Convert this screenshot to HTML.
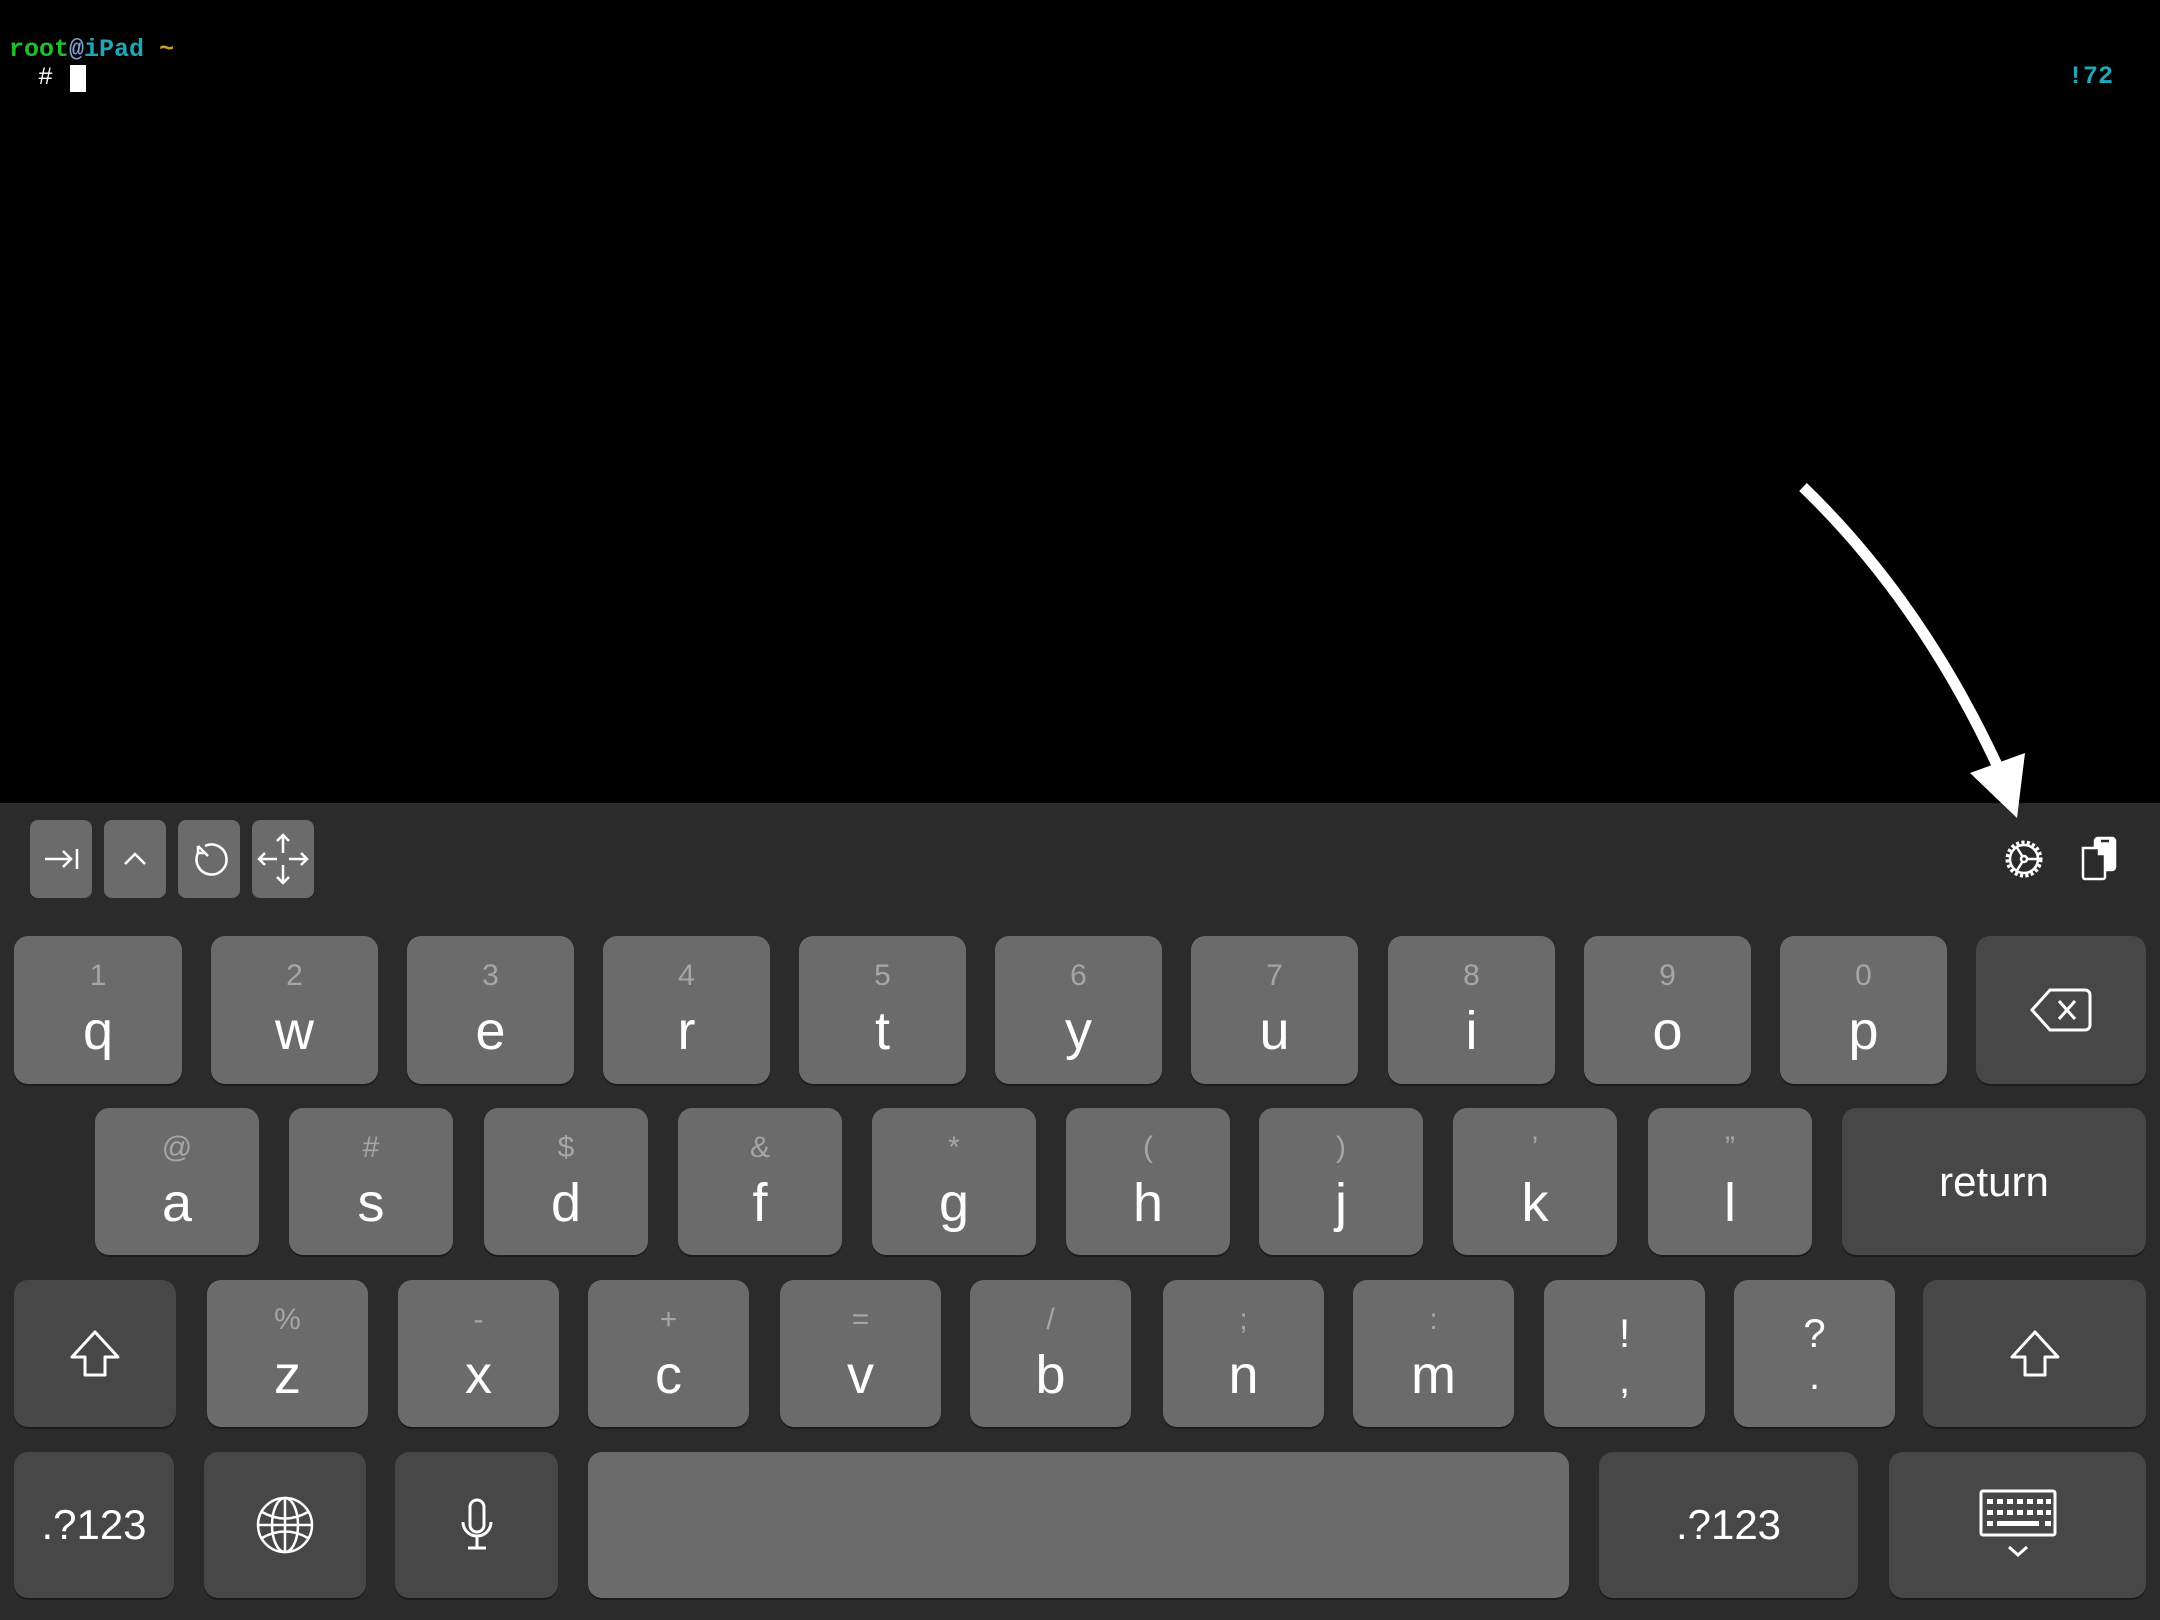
<!DOCTYPE html>
<html><head><meta charset="utf-8"><style>
html,body{margin:0;padding:0;background:#000;}
body{width:2160px;height:1620px;position:relative;overflow:hidden;font-family:"Liberation Sans",sans-serif;}
.term{position:absolute;font-family:"Liberation Mono",monospace;font-weight:bold;font-size:25px;line-height:28px;}
.kb{position:absolute;left:0;top:803px;width:2160px;height:817px;background:#2b2b2b;}
.k{position:absolute;background:#6b6b6b;border-radius:14px;box-shadow:0 2px 0 #1c1c1c;color:#fff;text-align:center;}
.d{background:#474747;}
.h{position:absolute;left:0;right:0;font-size:30px;line-height:30px;color:#a6a6a6;}
.l{position:absolute;left:0;right:0;font-size:54px;line-height:54px;}
.k .l[style*="top:73px"]{margin-top:-5px;}
.tb{position:absolute;top:820px;width:62px;height:78px;background:#6b6b6b;border-radius:8px;}
.c{position:absolute;left:0;top:0;width:100%;height:100%;display:flex;align-items:center;justify-content:center;}
svg{display:block;}
</style></head><body>
<div class="term" style="left:9px;top:36px;"><span style="color:#1fbf2c">root</span><span style="color:#7f9fd0">@</span><span style="color:#1fa7b8">iPad</span> <span style="color:#c8a020">~</span></div>
<div class="term" style="left:38px;top:64px;color:#fff;font-weight:normal;">#</div>
<div style="position:absolute;left:70px;top:65px;width:16px;height:27px;background:#fff;"></div>
<div class="term" style="left:2068px;top:63px;color:#1fa7b8;">!72</div>

<div class="kb"></div>
<!-- toolbar -->
<div class="tb" style="left:30px"><div class="c"><svg width="40" height="40" viewBox="0 0 40 40" fill="none" stroke="#fff" stroke-width="2.5"><path d="M4 20H30M22 12L30 20L22 28M36 10V30"/></svg></div></div>
<div class="tb" style="left:104px"><div class="c"><svg width="40" height="40" viewBox="0 0 40 40" fill="none" stroke="#fff" stroke-width="2.5"><path d="M10 25L20 15L30 25"/></svg></div></div>
<div class="tb" style="left:178px"><div class="c"><svg width="40" height="40" viewBox="0 0 40 40" fill="none" stroke="#fff" stroke-width="2.5"><path d="M9 14A15 15 0 1 0 16 7"/><path d="M9 7V14H16M9 7L19 17"/></svg></div></div>
<div class="tb" style="left:252px"><div class="c"><svg width="56" height="56" viewBox="0 0 56 56" fill="none" stroke="#fff" stroke-width="2.5"><path d="M28 4V22M28 34V52M4 28H22M34 28H52M22 10L28 4L34 10M22 46L28 52L34 46M10 22L4 28L10 34M46 22L52 28L46 34"/></svg></div></div>
<svg style="position:absolute;left:2003px;top:838px" width="42" height="42" viewBox="0 0 42 42" fill="none" stroke="#fff" stroke-width="2.5"><circle cx="21" cy="21" r="16" stroke-dasharray="3 2.2" stroke-width="5"/><circle cx="21" cy="21" r="14"/><circle cx="21" cy="21" r="3"/><path d="M24 21H35M19.5 18.5L13 8M19.5 23.5L13 34"/></svg>
<svg style="position:absolute;left:2080px;top:836px" width="40" height="46" viewBox="0 0 40 46" fill="none" stroke="#fff" stroke-width="2.5"><rect x="15" y="2" width="20" height="32" rx="3" fill="#fff"/><path d="M21 5H29" stroke="#2b2b2b"/><path d="M3 12H19L25 18V41A2 2 0 0 1 23 43H5A2 2 0 0 1 3 41Z" fill="#2b2b2b"/><path d="M19 12V18H25" fill="#fff"/></svg>

<svg style="position:absolute;left:0;top:0" width="2160" height="830">
<path d="M1803 487 Q1920 600 1997 765" stroke="#fff" stroke-width="11" fill="none"/>
<polygon points="1970,773 2025,753 2017,818" fill="#fff"/>
</svg>

<!-- row 1 -->
<div class="k" style="left:14px;top:936px;width:168px;height:148px"><div class="h" style="top:25px">1</div><div class="l" style="top:73px">q</div></div>
<div class="k" style="left:211px;top:936px;width:167px;height:148px"><div class="h" style="top:25px">2</div><div class="l" style="top:73px">w</div></div>
<div class="k" style="left:407px;top:936px;width:167px;height:148px"><div class="h" style="top:25px">3</div><div class="l" style="top:73px">e</div></div>
<div class="k" style="left:603px;top:936px;width:167px;height:148px"><div class="h" style="top:25px">4</div><div class="l" style="top:73px">r</div></div>
<div class="k" style="left:799px;top:936px;width:167px;height:148px"><div class="h" style="top:25px">5</div><div class="l" style="top:73px">t</div></div>
<div class="k" style="left:995px;top:936px;width:167px;height:148px"><div class="h" style="top:25px">6</div><div class="l" style="top:73px">y</div></div>
<div class="k" style="left:1191px;top:936px;width:167px;height:148px"><div class="h" style="top:25px">7</div><div class="l" style="top:73px">u</div></div>
<div class="k" style="left:1388px;top:936px;width:167px;height:148px"><div class="h" style="top:25px">8</div><div class="l" style="top:73px">i</div></div>
<div class="k" style="left:1584px;top:936px;width:167px;height:148px"><div class="h" style="top:25px">9</div><div class="l" style="top:73px">o</div></div>
<div class="k" style="left:1780px;top:936px;width:167px;height:148px"><div class="h" style="top:25px">0</div><div class="l" style="top:73px">p</div></div>
<div class="k d" style="left:1976px;top:936px;width:170px;height:148px"><div class="c"><svg width="64" height="48" viewBox="0 0 64 48" fill="none" stroke="#fff" stroke-width="3"><path d="M3 24L21 4H56A5 5 0 0 1 61 9V39A5 5 0 0 1 56 44H21Z"/><path d="M30 15L46 33M46 15L30 33"/></svg></div></div>
<!-- row 2 -->
<div class="k" style="left:95px;top:1108px;width:164px;height:147px"><div class="h" style="top:25px">@</div><div class="l" style="top:73px">a</div></div>
<div class="k" style="left:289px;top:1108px;width:164px;height:147px"><div class="h" style="top:25px">#</div><div class="l" style="top:73px">s</div></div>
<div class="k" style="left:484px;top:1108px;width:164px;height:147px"><div class="h" style="top:25px">$</div><div class="l" style="top:73px">d</div></div>
<div class="k" style="left:678px;top:1108px;width:164px;height:147px"><div class="h" style="top:25px">&amp;</div><div class="l" style="top:73px">f</div></div>
<div class="k" style="left:872px;top:1108px;width:164px;height:147px"><div class="h" style="top:25px">*</div><div class="l" style="top:73px">g</div></div>
<div class="k" style="left:1066px;top:1108px;width:164px;height:147px"><div class="h" style="top:25px">(</div><div class="l" style="top:73px">h</div></div>
<div class="k" style="left:1259px;top:1108px;width:164px;height:147px"><div class="h" style="top:25px">)</div><div class="l" style="top:73px">j</div></div>
<div class="k" style="left:1453px;top:1108px;width:164px;height:147px"><div class="h" style="top:25px">’</div><div class="l" style="top:73px">k</div></div>
<div class="k" style="left:1648px;top:1108px;width:164px;height:147px"><div class="h" style="top:25px">”</div><div class="l" style="top:73px">l</div></div>
<div class="k d" style="left:1842px;top:1108px;width:304px;height:147px"><div class="c" style="font-size:42px">return</div></div>
<!-- row 3 -->
<div class="k d" style="left:14px;top:1280px;width:162px;height:147px"><div class="c"><svg width="52" height="52" viewBox="0 0 52 52" fill="none" stroke="#fff" stroke-width="3" stroke-linejoin="round"><path d="M26 4L3 29H16V47H36V29H49Z"/></svg></div></div>
<div class="k" style="left:207px;top:1280px;width:161px;height:147px"><div class="h" style="top:25px">%</div><div class="l" style="top:73px">z</div></div>
<div class="k" style="left:398px;top:1280px;width:161px;height:147px"><div class="h" style="top:25px">-</div><div class="l" style="top:73px">x</div></div>
<div class="k" style="left:588px;top:1280px;width:161px;height:147px"><div class="h" style="top:25px">+</div><div class="l" style="top:73px">c</div></div>
<div class="k" style="left:780px;top:1280px;width:161px;height:147px"><div class="h" style="top:25px">=</div><div class="l" style="top:73px">v</div></div>
<div class="k" style="left:970px;top:1280px;width:161px;height:147px"><div class="h" style="top:25px">/</div><div class="l" style="top:73px">b</div></div>
<div class="k" style="left:1163px;top:1280px;width:161px;height:147px"><div class="h" style="top:25px">;</div><div class="l" style="top:73px">n</div></div>
<div class="k" style="left:1353px;top:1280px;width:161px;height:147px"><div class="h" style="top:25px">:</div><div class="l" style="top:73px">m</div></div>
<div class="k" style="left:1544px;top:1280px;width:161px;height:147px"><div class="l" style="top:34px;font-size:40px;line-height:40px">!</div><div class="l" style="top:80px;font-size:40px;line-height:40px">,</div></div>
<div class="k" style="left:1734px;top:1280px;width:161px;height:147px"><div class="l" style="top:34px;font-size:40px;line-height:40px">?</div><div class="l" style="top:76px;font-size:40px;line-height:40px">.</div></div>
<div class="k d" style="left:1923px;top:1280px;width:223px;height:147px"><div class="c"><svg width="52" height="52" viewBox="0 0 52 52" fill="none" stroke="#fff" stroke-width="3" stroke-linejoin="round"><path d="M26 4L3 29H16V47H36V29H49Z"/></svg></div></div>
<!-- row 4 -->
<div class="k d" style="left:14px;top:1452px;width:160px;height:146px"><div class="c" style="font-size:42px">.?123</div></div>
<div class="k d" style="left:204px;top:1452px;width:162px;height:146px"><div class="c"><svg width="60" height="60" viewBox="0 0 60 60" fill="none" stroke="#fff" stroke-width="2.5"><circle cx="30" cy="30" r="27"/><ellipse cx="30" cy="30" rx="13" ry="27"/><path d="M30 3V57M3 30H57M7 17Q30 30 53 17M7 43Q30 30 53 43"/></svg></div></div>
<div class="k d" style="left:395px;top:1452px;width:163px;height:146px"><div class="c"><svg width="34" height="54" viewBox="0 0 34 54" fill="none" stroke="#fff" stroke-width="3"><rect x="10" y="2" width="14" height="32" rx="7"/><path d="M3 24A14 14 0 0 0 31 24M17 38V49M8 50H26"/></svg></div></div>
<div class="k" style="left:588px;top:1452px;width:981px;height:146px"></div>
<div class="k d" style="left:1599px;top:1452px;width:259px;height:146px"><div class="c" style="font-size:42px">.?123</div></div>
<div class="k d" style="left:1889px;top:1452px;width:257px;height:146px"><div class="c"><svg width="78" height="72" viewBox="0 0 78 72" fill="none" stroke="#fff" stroke-width="3"><rect x="2" y="2" width="74" height="44" rx="2"/><g fill="#fff" stroke="none"><rect x="8" y="10" width="6" height="5"/><rect x="18" y="10" width="6" height="5"/><rect x="28" y="10" width="6" height="5"/><rect x="38" y="10" width="6" height="5"/><rect x="48" y="10" width="6" height="5"/><rect x="58" y="10" width="6" height="5"/><rect x="67" y="10" width="5" height="5"/><rect x="8" y="21" width="6" height="5"/><rect x="18" y="21" width="6" height="5"/><rect x="28" y="21" width="6" height="5"/><rect x="38" y="21" width="6" height="5"/><rect x="48" y="21" width="6" height="5"/><rect x="58" y="21" width="6" height="5"/><rect x="67" y="21" width="5" height="5"/><rect x="8" y="32" width="6" height="5"/><rect x="18" y="32" width="42" height="5"/><rect x="66" y="32" width="6" height="5"/></g><path d="M30 58L39 66L48 58"/></svg></div></div>
</body></html>
